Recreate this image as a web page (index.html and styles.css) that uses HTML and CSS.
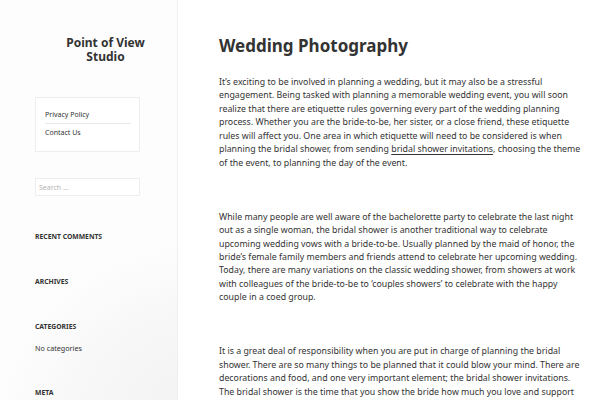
FILE: index.html
```html
<!DOCTYPE html>
<html lang="en">
  <head>
    <meta charset="UTF-8" />
    <meta name="viewport" content="width=device-width, initial-scale=1.0" />
    <title>Wedding Photography – Point of View Studio</title>
    <link rel="stylesheet" href="styles.css">
  </head>
  <body>
    <div class="page">
      <aside class="sidebar">
        <h1 class="site-title">Point of View Studio</h1>
        <nav class="menu">
          <a href="#">Privacy Policy</a>
          <a href="#">Contact Us</a>
        </nav>
        <input class="search" type="search" placeholder="Search …" />
        <div class="widget">
          <h2>Recent Comments</h2>
        </div>
        <div class="widget">
          <h2>Archives</h2>
        </div>
        <div class="widget">
          <h2>Categories</h2>
          <p>No categories</p>
        </div>
        <div class="widget">
          <h2>Meta</h2>
        </div>
      </aside>
      <main class="content">
        <h1 class="entry-title">Wedding Photography</h1>
        <p>It’s exciting to be involved in planning a wedding, but it may also be a stressful engagement. Being tasked with planning a memorable wedding event, you will soon realize that there are etiquette rules governing every part of the wedding planning process. Whether you are the bride-to-be, her sister, or a close friend, these etiquette rules will affect you. One area in which etiquette will need to be considered is when planning the bridal shower, from sending <a href="#">bridal shower invitations</a>, choosing the theme of the event, to planning the day of the event.</p>
        <p>While many people are well aware of the bachelorette party to celebrate the last night out as a single woman, the bridal shower is another traditional way to celebrate upcoming wedding vows with a bride-to-be. Usually planned by the maid of honor, the bride’s female family members and friends attend to celebrate her upcoming wedding. Today, there are many variations on the classic wedding shower, from showers at work with colleagues of the bride-to-be to ‘couples showers’ to celebrate with the happy couple in a coed group.</p>
        <p>It is a great deal of responsibility when you are put in charge of planning the bridal shower. There are so many things to be planned that it could blow your mind. There are decorations and food, and one very important element; the bridal shower invitations. The bridal shower is the time that you show the bride how much you love and support her, and the invitations set the tone for the whole party.</p>
      </main>
    </div>
  </body>
</html>
```

FILE: styles.css
```css
html,
body {
  margin: 0;
  height: 100%;
  overflow: hidden;
}
body {
  font-family: "Noto Sans", "Open Sans", sans-serif;
  color: #333;
  background: #fff;
}
.page {
  display: flex;
  min-height: 100%;
}

/* sidebar */
.sidebar {
  width: 141px;
  flex-shrink: 0;
  padding: 0 1px 0 35px;
  border-right: 1px solid #efefef;
  background:
    radial-gradient(ellipse 260px 220px at 210px 420px, #f2f2f2 0%, #f8f8f8 55%, rgba(252, 252, 252, 0) 80%),
    #fdfdfd;
}
.site-title {
  margin: 36px auto 0;
  max-width: 95px;
  font-size: 12px;
  line-height: 13.5px;
  font-weight: 700;
  text-align: center;
  color: #333;
}
.menu {
  display: flex;
  flex-direction: column;
  margin: 34px 0 0;
  width: 105px;
  box-sizing: border-box;
  padding: 8px 8px 10px 9px;
  border: 1px solid #eeeeee;
  background: #fff;
}
.menu a {
  font-size: 7px;
  line-height: 9px;
  padding: 4px 0 4px 0;
  color: #333;
  text-decoration: none;
}
.menu a + a {
  border-top: 1px solid #eaeaea;
}
.search {
  display: block;
  margin-top: 26px;
  width: 105px;
  height: 18px;
  box-sizing: border-box;
  padding: 0 3px;
  border: 1px solid #eeeeee;
  font-family: inherit;
  font-size: 7px;
  color: #333;
  background: #fff;
  outline: none;
  appearance: none;
}
.search::placeholder {
  color: #b4b4b4;
}
.widget {
  margin-top: 36px;
}
.widget h2 {
  margin: 0;
  font-size: 6.8px;
  line-height: 10px;
  font-weight: 700;
  text-transform: uppercase;
  color: #333;
}
.widget p {
  margin: 11px 0 0;
  font-size: 7.2px;
  line-height: 10px;
}
.widget + .widget {
  margin-top: 35px;
}

/* main */
.content {
  flex: 1;
  padding: 0 16px 0 41px;
}
.entry-title {
  margin: 35px 0 0;
  font-size: 17px;
  line-height: 22px;
  font-weight: 700;
  color: #333;
}
.content p {
  margin: 19px 0 0;
  font-size: 8.8px;
  line-height: 13.45px;
  color: #333;
}
.content p + p {
  margin-top: 40.5px;
}
.content a {
  color: #333;
  text-decoration: underline;
  text-decoration-thickness: 1px;
  text-underline-offset: 2px;
}
```
